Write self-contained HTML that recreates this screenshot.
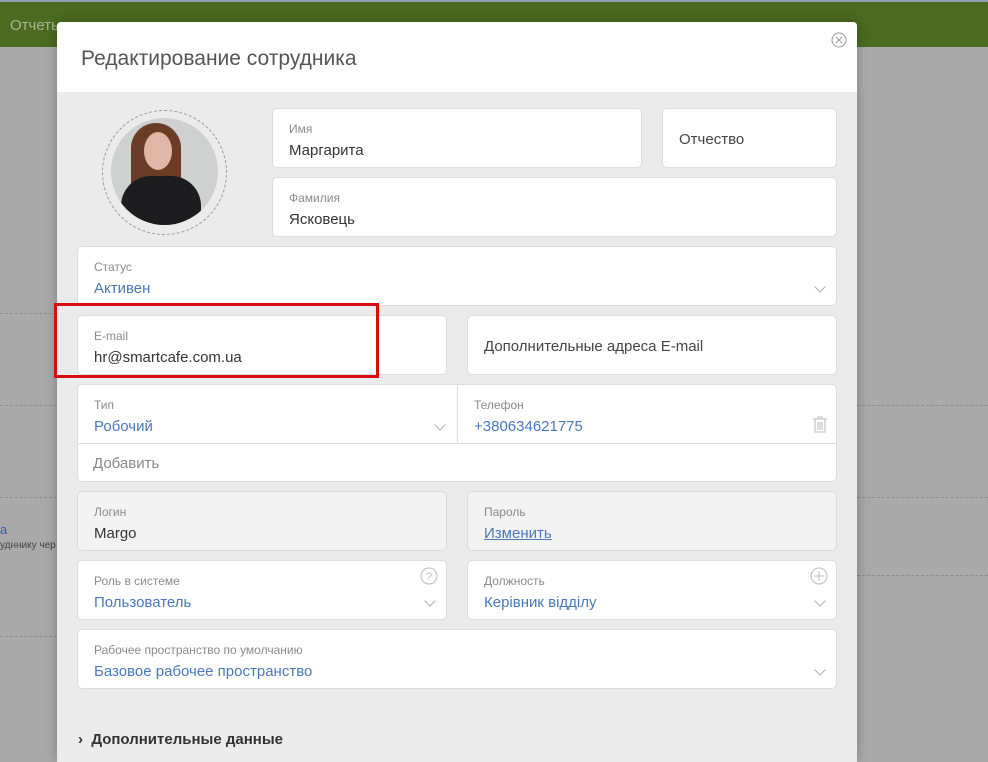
<!DOCTYPE html>
<html><head><meta charset="utf-8"><style>
*{box-sizing:border-box;margin:0;padding:0}
body{width:988px;height:749px;overflow:hidden;position:relative;background:#a9a9a9;font-family:"Segoe UI","Liberation Sans","DejaVu Sans",sans-serif}
.top{position:absolute;left:0;top:0;width:988px;height:47px;background:#4a6b20;border-top:2px solid #8aa0b8}
.top span{position:absolute;top:15px;color:#a8b796;font-size:15px}
.dash{position:absolute;height:0;border-top:1px dashed #8e8e8e}
.modal{position:absolute;left:57px;top:22px;width:800px;height:740px;background:#ebebeb;border-radius:4px 4px 0 0;box-shadow:0 0 12px rgba(0,0,0,.25);overflow:hidden}
.hd{height:70px;background:#fff;padding:25px 0 0 24px;font-size:21px;color:#555}
.f{position:absolute;background:#fff;border:1px solid #dcdcdc;border-radius:5px}
.l{position:absolute;left:16px;top:13px;font-size:12px;color:#8a8a8a}
.v{position:absolute;left:16px;top:33px;font-size:15px;color:#333}
.b{color:#4a78b8}
.p{position:absolute;left:16px;top:22px;font-size:15px;color:#444}
.chev{position:absolute;right:12px;top:36px;width:8px;height:8px;border-right:1px solid #aaa;border-bottom:1px solid #aaa;transform:rotate(45deg)}
</style></head><body>
<div class="top"><span style="left:10px">Отчеты</span></div>
<div class="dash" style="left:0;width:57px;top:313px"></div>
<div class="dash" style="left:0;width:57px;top:405px"></div>
<div class="dash" style="left:0;width:57px;top:497px"></div>
<div class="dash" style="left:0;width:57px;top:636px"></div>
<div class="dash" style="left:857px;width:131px;top:405px"></div>
<div class="dash" style="left:857px;width:131px;top:497px"></div>
<div class="dash" style="left:857px;width:131px;top:575px"></div>
<div style="position:absolute;left:0;top:522px;color:#2a5db0;font-size:13px">а</div>
<div style="position:absolute;left:0;top:540px;color:#444;font-size:10px">удннику чер</div>
<div class="modal">
<div class="hd">Редактирование сотрудника</div>
<svg style="position:absolute;right:10px;top:10px" width="16" height="16" viewBox="0 0 16 16"><circle cx="8" cy="8" r="7" fill="none" stroke="#999"/><path d="M5 5l6 6M11 5l-6 6" stroke="#999"/></svg>
</div>
<div style="position:absolute;left:102px;top:110px;width:125px;height:125px;border:1px dashed #999;border-radius:50%"></div>
<div style="position:absolute;left:111px;top:118px;width:107px;height:107px;border-radius:50%;overflow:hidden;background:#cfd0d0">
<div style="position:absolute;left:20px;top:5px;width:50px;height:110px;background:#6b3c25;border-radius:25px 25px 0 0"></div>
<div style="position:absolute;left:33px;top:14px;width:28px;height:38px;background:#e0b7a6;border-radius:50%"></div>
<div style="position:absolute;left:10px;top:58px;width:80px;height:60px;background:#1d1d1f;border-radius:30px 30px 0 0"></div>
</div>
<div class="f" style="left:272px;top:108px;width:370px;height:60px"><div class="l">Имя</div><div class="v">Маргарита</div></div>
<div class="f" style="left:662px;top:108px;width:175px;height:60px"><div class="p">Отчество</div></div>
<div class="f" style="left:272px;top:177px;width:565px;height:60px"><div class="l">Фамилия</div><div class="v">Ясковець</div></div>
<div class="f" style="left:77px;top:246px;width:760px;height:60px"><div class="l">Статус</div><div class="v b">Активен</div><div class="chev"></div></div>
<div class="f" style="left:77px;top:315px;width:370px;height:60px"><div class="l">E-mail</div><div class="v">hr@smartcafe.com.ua</div></div>
<div class="f" style="left:467px;top:315px;width:370px;height:60px"><div class="p">Дополнительные адреса E-mail</div></div>
<div class="f" style="left:77px;top:384px;width:760px;height:98px">
<div class="l">Тип</div><div class="v b">Робочий</div><div class="chev" style="right:392px"></div>
<div style="position:absolute;left:379px;top:0;height:58px;border-left:1px solid #dcdcdc"></div>
<div class="l" style="left:396px">Телефон</div><div class="v b" style="left:396px">+380634621775</div>
<svg style="position:absolute;right:8px;top:31px" width="16" height="18" viewBox="0 0 16 18"><path d="M1 3h14M6 3V1h4v2M3 3v13h10V3M6 6v8M8 6v8M10 6v8" fill="none" stroke="#bbb"/></svg>
<div style="position:absolute;left:0;right:0;top:58px;border-top:1px solid #dcdcdc"></div>
<div class="p" style="left:15px;top:70px;color:#888">Добавить</div></div>
<div class="f" style="left:77px;top:491px;width:370px;height:60px;background:#f3f3f3"><div class="l">Логин</div><div class="v">Margo</div></div>
<div class="f" style="left:467px;top:491px;width:370px;height:60px;background:#f3f3f3"><div class="l">Пароль</div><div class="v b" style="text-decoration:underline">Изменить</div></div>
<div class="f" style="left:77px;top:560px;width:370px;height:60px"><div class="l">Роль в системе</div><div class="v b">Пользователь</div><div class="chev"></div>
<svg style="position:absolute;right:8px;top:6px" width="18" height="18"><circle cx="9" cy="9" r="8" fill="none" stroke="#bbb"/><text x="9" y="13" font-size="11" text-anchor="middle" fill="#bbb" font-family="Liberation Sans">?</text></svg></div>
<div class="f" style="left:467px;top:560px;width:370px;height:60px"><div class="l">Должность</div><div class="v b">Керівник відділу</div><div class="chev"></div>
<svg style="position:absolute;right:8px;top:6px" width="18" height="18"><circle cx="9" cy="9" r="8" fill="none" stroke="#bbb"/><path d="M9 4v10M4 9h10" stroke="#bbb"/></svg></div>
<div class="f" style="left:77px;top:629px;width:760px;height:60px"><div class="l">Рабочее пространство по умолчанию</div><div class="v b">Базовое рабочее пространство</div><div class="chev"></div></div>
<div style="position:absolute;left:78px;top:731px;font-size:15px;font-weight:bold;color:#333">›&nbsp;&nbsp;Дополнительные данные</div>
<div style="position:absolute;left:54px;top:303px;width:325px;height:75px;border:3px solid #d40f0f"></div>
</body></html>
